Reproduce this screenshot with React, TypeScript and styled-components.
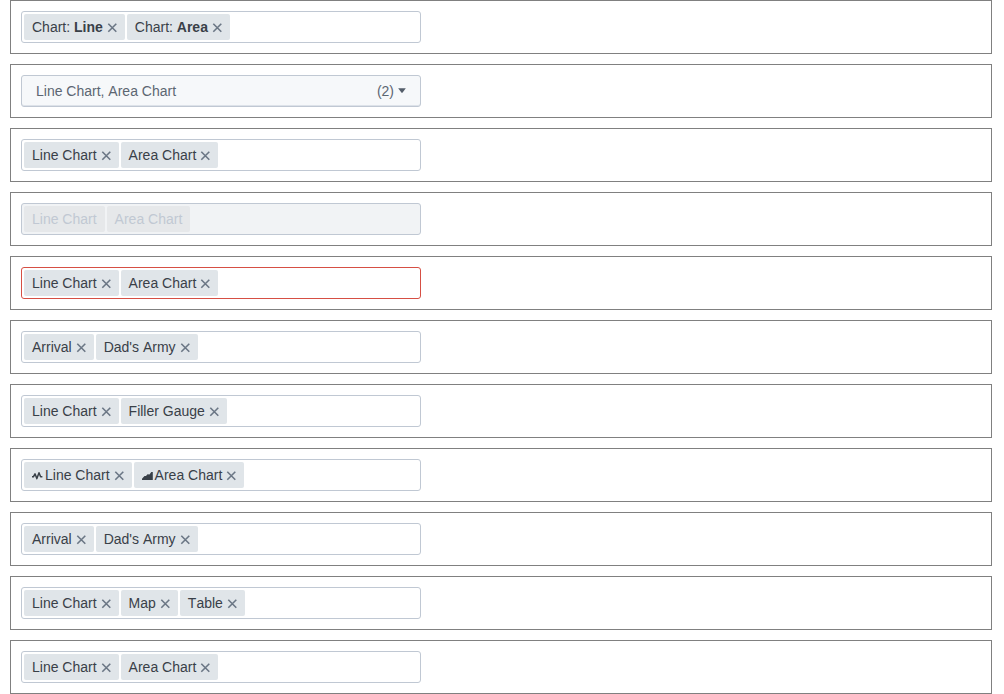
import React from 'react';
import styled, { createGlobalStyle, css } from 'styled-components';

const GlobalStyle = createGlobalStyle`
  *, *::before, *::after { box-sizing: border-box; }
  body {
    margin: 0;
    background: #fff;
    color: #394048;
    font: 14px/20px "Liberation Sans", Arial, sans-serif;
    font-kerning: none;
  }
`;

const Page = styled.main`
  display: flex;
  flex-direction: column;
  gap: 10px;
  padding: 0 12px 0 10px;
`;

const Example = styled.section`
  padding: 10px;
  border: 1px solid #808080;
`;

type FieldState = 'normal' | 'disabled' | 'invalid';

const Field = styled.div<{ $state: FieldState }>`
  display: flex;
  gap: 2px;
  width: 100%;
  max-width: 400px;
  min-height: 32px;
  padding: 2px;
  border: 1px solid ${p => (p.$state === 'invalid' ? '#d64f44' : '#c0c8d3')};
  border-radius: 3px;
  background: ${p => (p.$state === 'disabled' ? '#f1f3f5' : '#fff')};
`;

const TagList = styled.ul`
  display: flex;
  gap: 2px;
  margin: 0;
  padding: 0;
  list-style: none;
`;

const Tag = styled.li<{ $disabled: boolean }>`
  display: flex;
  align-items: center;
  height: 26px;
  padding: 0 8px;
  border-radius: 2px;
  background: #e0e5e9;
  white-space: nowrap;
  ${p =>
    p.$disabled &&
    css`
      background: #e6e8ea;
      color: #c1c8d3;
    `}
`;

const RemoveButton = styled.button`
  display: flex;
  margin: 2px 0 0 5px;
  padding: 0;
  border: 0;
  background: none;
  color: #6b7785;
  cursor: pointer;
`;

const Entry = styled.input`
  flex: 1;
  min-width: 0;
  padding: 0 4px;
  border: 0;
  outline: 0;
  background: transparent;
  color: inherit;
  font: inherit;
`;

const TagIcon = styled.svg`
  flex: none;
  width: 11px;
  height: 10px;
  margin: 2px 2px 0 0;
  color: #394048;
`;

const Toggle = styled.button`
  display: flex;
  align-items: center;
  justify-content: space-between;
  width: 100%;
  max-width: 400px;
  height: 32px;
  padding: 0 14px;
  border: 1px solid #c0c8d3;
  border-radius: 3px;
  background: #f6f8fa;
  box-shadow: inset 0 -1px 0 #dde2e9;
  color: #5c6672;
  font: inherit;
  font-kerning: none;
  cursor: pointer;
`;

const Count = styled.span`
  display: flex;
  align-items: center;
  gap: 4px;
`;

const CrossIcon = () => (
  <svg width="9" height="8" viewBox="0 0 9 8" overflow="visible" aria-hidden="true">
    <path d="M0.3 -0.2L8.3 7.8M8.3 -0.2L0.3 7.8" stroke="currentColor" strokeWidth="1.6" fill="none" />
  </svg>
);

const LineIcon = () => (
  <TagIcon viewBox="0 0 11 10" aria-hidden="true">
    <path d="M0 5.8H1.4L3 2.8L4.9 7.6L7 1.8L8.6 5.8H10.4" fill="none" stroke="currentColor" strokeWidth="1.5" strokeLinejoin="round" />
  </TagIcon>
);

const AreaIcon = () => (
  <TagIcon viewBox="0 0 11 10" aria-hidden="true">
    <path d="M0 9V7.8L2.5 5H4L5.5 3.2L7.5 3.6L9.3 1H10.8V9Z" fill="currentColor" />
  </TagIcon>
);

const CaretIcon = () => (
  <svg width="8" height="6" viewBox="0 0 8 6" aria-hidden="true">
    <path d="M0.2 0.2H7.8L4.6 4.6Q4 5.3 3.4 4.6Z" fill="#545e6a" />
  </svg>
);

interface Item {
  text: string;
  prefix?: string;
  icon?: React.ReactNode;
}

interface TagComboProps {
  label: string;
  items: Item[];
  state?: FieldState;
}

const TagCombo = ({ label, items, state = 'normal' }: TagComboProps) => {
  const disabled = state === 'disabled';
  return (
    <Field $state={state}>
      <TagList>
        {items.map(({ text, prefix, icon }) => (
          <Tag key={text} $disabled={disabled}>
            {icon}
            <span>
              {prefix ? <>{prefix} <strong>{text}</strong></> : text}
            </span>
            {!disabled && (
              <RemoveButton type="button" aria-label={`Remove ${text}`}>
                <CrossIcon />
              </RemoveButton>
            )}
          </Tag>
        ))}
      </TagList>
      <Entry type="text" aria-label={label} disabled={disabled} aria-invalid={state === 'invalid'} />
    </Field>
  );
};

const charts: Item[] = [{ text: 'Line Chart' }, { text: 'Area Chart' }];
const movies: Item[] = [{ text: 'Arrival' }, { text: "Dad's Army" }];

export default function App() {
  return (
    <>
      <GlobalStyle />
      <Page>
        <Example>
          <TagCombo label="Chart type" items={[{ prefix: 'Chart:', text: 'Line' }, { prefix: 'Chart:', text: 'Area' }]} />
        </Example>
        <Example>
          <Toggle type="button" aria-haspopup="listbox">
            <span>Line Chart, Area Chart</span>
            <Count>
              (2)
              <CaretIcon />
            </Count>
          </Toggle>
        </Example>
        <Example><TagCombo label="Charts" items={charts} /></Example>
        <Example><TagCombo label="Disabled charts" items={charts} state="disabled" /></Example>
        <Example><TagCombo label="Invalid charts" items={charts} state="invalid" /></Example>
        <Example><TagCombo label="Movies" items={movies} /></Example>
        <Example><TagCombo label="Gauges" items={[{ text: 'Line Chart' }, { text: 'Filler Gauge' }]} /></Example>
        <Example>
          <TagCombo
            label="Charts with icons"
            items={[{ text: 'Line Chart', icon: <LineIcon /> }, { text: 'Area Chart', icon: <AreaIcon /> }]}
          />
        </Example>
        <Example><TagCombo label="More movies" items={movies} /></Example>
        <Example><TagCombo label="Visualizations" items={[{ text: 'Line Chart' }, { text: 'Map' }, { text: 'Table' }]} /></Example>
        <Example><TagCombo label="More charts" items={charts} /></Example>
      </Page>
    </>
  );
}
